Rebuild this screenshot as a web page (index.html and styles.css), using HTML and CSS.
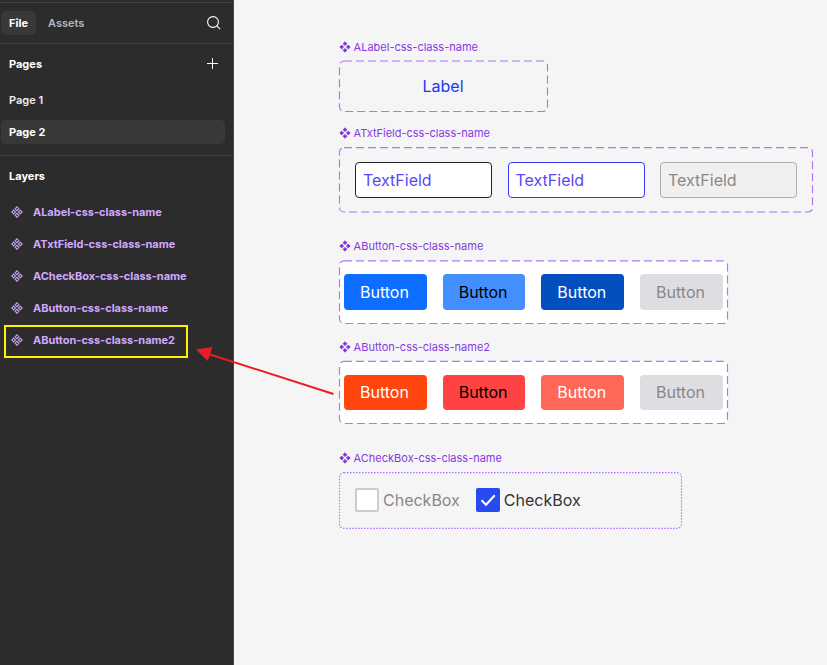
FILE: index.html
```html
<!DOCTYPE html>
<html lang="en">
<head>
<meta charset="utf-8">
<title>Component library</title>
<link rel="stylesheet" href="styles.css">
</head>
<body>
<svg class="defs" aria-hidden="true">
  <symbol id="component" viewBox="0 0 12 12">
    <path d="M6 .8 7.9 2.7 6 4.6 4.1 2.7ZM6 7.4 7.9 9.3 6 11.2 4.1 9.3ZM2.7 4.1 4.6 6 2.7 7.9 .8 6ZM9.3 4.1 11.2 6 9.3 7.9 7.4 6Z"/>
  </symbol>
</svg>
<div class="app">
  <aside class="sidebar">
    <header class="tabs">
      <span class="tab tab-active">File</span>
      <span class="tab">Assets</span>
      <svg class="search" viewBox="0 0 14 14"><circle cx="6" cy="6" r="5.4"/><path d="m9.8 9.8 3.4 3.4"/></svg>
    </header>
    <section class="pages">
      <h2 class="heading">Pages<svg class="plus" viewBox="0 0 12 12"><path d="M6.5 0v11M1 5.5h11"/></svg></h2>
      <div class="page">Page 1</div>
      <div class="page page-active">Page 2</div>
    </section>
    <section class="layers">
      <h2 class="heading">Layers</h2>
      <div class="layer"><svg class="layer-icon"><use href="#component"/></svg><span>ALabel-css-class-name</span></div>
      <div class="layer"><svg class="layer-icon"><use href="#component"/></svg><span>ATxtField-css-class-name</span></div>
      <div class="layer"><svg class="layer-icon"><use href="#component"/></svg><span>ACheckBox-css-class-name</span></div>
      <div class="layer"><svg class="layer-icon"><use href="#component"/></svg><span>AButton-css-class-name</span></div>
      <div class="layer marked"><svg class="layer-icon"><use href="#component"/></svg><span>AButton-css-class-name2</span></div>
    </section>
  </aside>
  <main class="canvas">
    <section class="group group-label">
      <h3 class="title"><svg class="title-icon"><use href="#component"/></svg>ALabel-css-class-name</h3>
      <div class="frame frame-label">
        <svg class="outline"><rect x=".5" y="1" width="208" height="50.5" rx="4.5"/></svg>
        <span class="label">Label</span>
      </div>
    </section>
    <section class="group group-text">
      <h3 class="title"><svg class="title-icon"><use href="#component"/></svg>ATxtField-css-class-name</h3>
      <div class="frame frame-text">
        <svg class="outline"><rect x=".5" y=".6" width="473" height="64.4" rx="4.5"/></svg>
        <div class="field">TextField</div>
        <div class="field field-focus">TextField</div>
        <div class="field field-disabled">TextField</div>
      </div>
    </section>
    <section class="group group-button">
      <h3 class="title"><svg class="title-icon"><use href="#component"/></svg>AButton-css-class-name</h3>
      <div class="frame frame-button">
        <svg class="outline"><rect x=".5" y=".9" width="388" height="62.6" rx="4.5"/></svg>
        <div class="button blue">Button</div>
        <div class="button blue-hover">Button</div>
        <div class="button blue-press">Button</div>
        <div class="button disabled">Button</div>
      </div>
    </section>
    <section class="group group-button2">
      <h3 class="title"><svg class="title-icon"><use href="#component"/></svg>AButton-css-class-name2</h3>
      <div class="frame frame-button2">
        <svg class="outline"><rect x=".5" y=".4" width="388" height="62.1" rx="4.5"/></svg>
        <div class="button red">Button</div>
        <div class="button red-hover">Button</div>
        <div class="button red-press">Button</div>
        <div class="button disabled">Button</div>
      </div>
    </section>
    <section class="group group-check">
      <h3 class="title"><svg class="title-icon"><use href="#component"/></svg>ACheckBox-css-class-name</h3>
      <div class="frame frame-check">
        <svg class="outline dotted"><rect x=".5" y=".6" width="342" height="55.8" rx="4.5"/></svg>
        <div class="check"><span class="box"></span><span>CheckBox</span></div>
        <div class="check check-on"><span class="box box-on"><svg class="tick" viewBox="0 0 24 24"><path d="m5.5 12.3 4.5 4.4 8.8-9.4"/></svg></span><span>CheckBox</span></div>
      </div>
    </section>
  </main>
  <svg class="arrow" viewBox="0 0 140 50"><path class="shaft" d="M14 7.5 137.5 47"/><path class="head" d="M0 2.5 16.5 0 11.7 14Z"/></svg>
</div>
</body>
</html>
```
FILE: styles.css
```css
* { box-sizing: border-box; }
body { margin: 0; font-family: Inter, "Liberation Sans", sans-serif; }
h2, h3 { margin: 0; }
svg { display: block; flex: none; }
.defs { position: absolute; width: 0; height: 0; }
.app { position: relative; display: flex; width: 827px; height: 665px; overflow: hidden; background: #f5f5f5; }

.sidebar { width: 234px; flex: none; border-right: 1px solid #444; background: #2c2c2c; color: #fff; font-size: 11px; font-weight: 600; line-height: 16px; padding-top: 2px; }
.tabs { display: flex; align-items: center; height: 42px; padding: 0 12px 0 1px; border-top: 1px solid #444; border-bottom: 1px solid #444; }
.tab { height: 24px; padding: 4px 8px; margin-right: 4px; border-radius: 5px; color: #b8b8b8; }
.tab-active { background: #383838; color: #fff; font-weight: 700; }
.search { width: 14px; height: 14px; margin-left: auto; fill: none; stroke: #fff; stroke-width: 1.1; }
.heading { display: flex; align-items: center; justify-content: space-between; height: 40px; padding: 0 15px 0 9px; font-size: 11px; font-weight: 700; }
.plus { width: 12px; height: 12px; fill: none; stroke: #fff; stroke-width: 1; }
.pages { height: 112px; border-bottom: 1px solid #444; }
.page { height: 24px; margin: 4px 8px 8px 1px; padding: 4px 8px; border-radius: 5px; color: #eee; }
.page-active { background: #383838; color: #fff; font-weight: 700; }
.layer { display: flex; align-items: center; gap: 10px; height: 32px; padding-left: 11px; color: #d1a8ff; font-weight: 700; letter-spacing: -.03px; }
.layer-icon { width: 12px; height: 12px; fill: none; stroke: #c3a0e8; stroke-width: 1.1; }
.marked { height: 33px; width: 184px; margin: 1px 0 0 4px; padding: 0 0 3px 5px; border: 2px solid #fff200; }

.canvas { flex: 1; padding: 40px 0 0 105px; }
.title { display: flex; align-items: center; gap: 2.6px; height: 14px; font-size: 11px; line-height: 14px; font-weight: 400; color: #8638e5; }
.title-icon { width: 12px; height: 12px; fill: #7d35d8; stroke: #7d35d8; stroke-width: .8; }
.frame { position: relative; display: flex; }
.outline { position: absolute; left: 0; top: 0; width: 100%; height: 100%; fill: none; stroke: #9747ff; stroke-opacity: .75; stroke-width: 1.15; stroke-dasharray: 8 4; overflow: visible; }
.dotted { stroke-dasharray: 1.5 1.5; }
.group-label { height: 86px; }
.frame-label { width: 209px; height: 52px; margin-top: 6px; align-items: center; justify-content: center; padding-right: 1px; }
.label { color: #1838f5; font-size: 16px; }
.group-text { height: 113px; }
.frame-text { width: 474px; height: 66px; margin-top: 7px; padding: 15px 16px; gap: 15.5px; }
.field { width: 137px; height: 36px; padding-left: 7px; border: 1px solid #222; border-radius: 4px; background: #fff; color: #5749f3; font-size: 16px; line-height: 34px; }
.field-focus { border-color: #3939f5; }
.field-disabled { background: #f0f0f0; border-color: #adadad; color: #888; }
.group-button { height: 101px; }
.frame-button, .frame-button2 { width: 389px; height: 64px; margin-top: 7px; padding: 14px 5px; gap: 16px; }
.frame-button .outline, .frame-button2 .outline { fill: #fff; }
.frame-button2 { height: 63px; }
.button { position: relative; width: 82.7px; height: 35.6px; padding-right: 1.8px; border-radius: 4px; text-align: center; font-size: 16px; line-height: 36px; color: #fff; }
.frame-button2 .button { height: 35px; line-height: 34px; }
.blue { background: #0d6eff; }
.blue-hover { background: #448fff; color: #000; }
.blue-press { background: #044fc0; }
.red { background: #ff460f; }
.red-hover { background: #ff4343; color: #000; }
.red-press { background: #ff6759; }
.disabled { background: #dddde2; color: #888; }
.group-button2 { height: 111px; }
.frame-check { width: 343px; height: 57px; margin-top: 7px; padding: 16px; gap: 16px; }
.check { display: flex; align-items: center; gap: 3.6px; height: 24px; font-size: 16px; color: #888; }
.check-on { color: #333; }
.box { width: 24.4px; height: 24.4px; border: 2px solid #ccc; border-radius: 2px; background: #fff; }
.box-on { border: 0; background: #274bf0; }
.tick { width: 24px; height: 24px; fill: none; stroke: #fff; stroke-width: 2; }
.arrow { position: absolute; left: 196px; top: 347px; width: 140px; height: 50px; overflow: visible; }
.shaft { fill: none; stroke: #ed1c24; stroke-width: 2; }
.head { fill: #ed1c24; }
```
